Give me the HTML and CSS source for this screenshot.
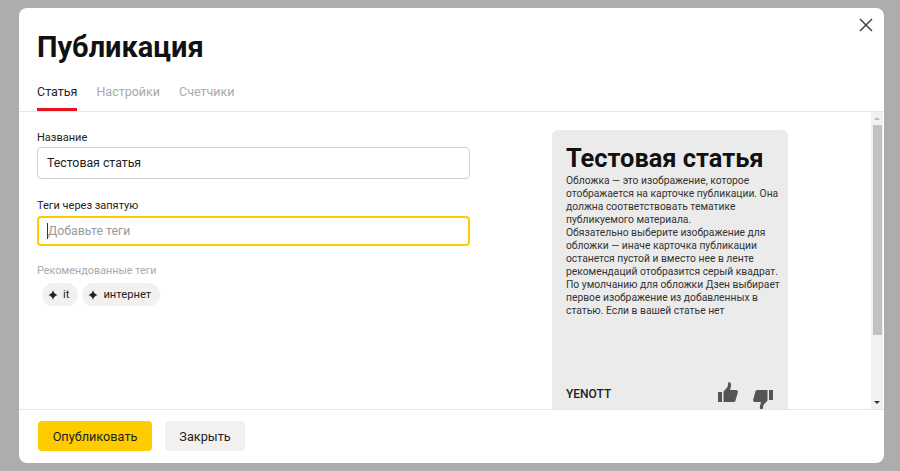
FILE: index.html
```html
<!DOCTYPE html>
<html lang="ru">
<head>
    <meta charset="UTF-8">
    <title>Публикация</title>
    <link rel="stylesheet" href="styles.css">
</head>
<body>
    <div class="modal">
        <button class="close" aria-label="Закрыть">
            <svg width="14" height="14" viewBox="0 0 14 14"><path d="M1 1l12 12M13 1L1 13" stroke="#444" stroke-width="1.5" fill="none"/></svg>
        </button>
        <div class="header">
            <h1>Публикация</h1>
            <div class="tabs">
                <span class="tab active">Статья</span>
                <span class="tab">Настройки</span>
                <span class="tab">Счетчики</span>
            </div>
        </div>
        <div class="content">
            <div class="form">
                <div class="form-group">
                    <label>Название</label>
                    <div class="input">Тестовая статья</div>
                </div>
                <div class="form-group">
                    <label>Теги через запятую</label>
                    <div class="input focused"><span class="caret"></span>Добавьте теги</div>
                </div>
                <div class="rec-title">Рекомендованные теги</div>
                <div class="chips">
                    <span class="chip"><svg width="10" height="10" viewBox="0 0 10 10"><path d="M5 0Q5.800 4.200 10 5 5.800 5.800 5 10 4.200 5.800 0 5 4.200 4.200 5 0z" fill="#222"/></svg>it</span>
                    <span class="chip"><svg width="10" height="10" viewBox="0 0 10 10"><path d="M5 0Q5.800 4.200 10 5 5.800 5.800 5 10 4.200 5.800 0 5 4.200 4.200 5 0z" fill="#222"/></svg>интернет</span>
                </div>
            </div>
            <div class="card">
                <h2>Тестовая статья</h2>
                <p>Обложка — это изображение, которое<br>отображается на карточке публикации. Она<br>должна соответствовать тематике<br>публикуемого материала.</p>
                <p>Обязательно выберите изображение для<br>обложки — иначе карточка публикации<br>останется пустой и вместо нее в ленте<br>рекомендаций отобразится серый квадрат.<br>По умолчанию для обложки Дзен выбирает<br>первое изображение из добавленных в<br>статью. Если в вашей статье нет</p>
                <div class="card-footer">
                    <span class="channel">YENOTT</span>
                    <div class="thumbs">
                        <svg class="up" width="20" height="21" viewBox="0 0 20 21"><path d="M0 10h4v10H0zM5.500 9.500l4-4.500 1-5c2 0 3 1.500 2.500 4l-1 4h6c1.500 0 2.200 1.200 1.800 2.500l-2.300 8c-.3 1-1 1.500-2 1.500h-10z" fill="#555"/></svg>
                        <svg class="down" width="20" height="21" viewBox="0 0 20 21"><path d="M20 11h-4V1h4zM14.500 11.500l-4 4.500-1 5c-2 0-3-1.500-2.500-4l1-4H2C.5 13-.2 11.800.2 10.500l2.300-8c.3-1 1-1.500 2-1.500h10z" fill="#555"/></svg>
                    </div>
                </div>
            </div>
            <div class="scrollbar">
                <span class="arrow up"></span>
                <div class="track"><div class="thumb"></div></div>
                <span class="arrow down"></span>
            </div>
        </div>
        <div class="footer">
            <button class="btn primary">Опубликовать</button>
            <button class="btn">Закрыть</button>
        </div>
    </div>
</body>
</html>
```

FILE: styles.css
```css
html, body { height: 100%; }
body { margin: 0; padding: 8px 16px 8px 19px; box-sizing: border-box; background: #adadad; font-family: Roboto, "Noto Sans", Arial, sans-serif; color: #222; overflow: hidden; }
.modal { position: relative; height: 455px; background: #fff; border-radius: 8px; display: flex; flex-direction: column; overflow: hidden; }
.close { position: absolute; top: 10px; right: 11px; padding: 0; width: 14px; height: 14px; border: none; background: none; }
.header { height: 104px; box-sizing: border-box; padding: 21px 18px 0; border-bottom: 1px solid #e6e6e6; flex: none; }
h1 { margin: 0; font-size: 29px; line-height: 36px; font-weight: 700; color: #111; }
.tabs { display: flex; gap: 19px; margin-top: 17px; }
.tab { font-size: 12.5px; line-height: 20px; padding-bottom: 9px; color: #aaa; border-bottom: 3px solid transparent; height: 17px; }
.tab.active { color: #222; border-bottom-color: #e3131c; }
.content { flex: 1; display: flex; min-height: 0; overflow: hidden; }
.form { width: 433px; padding: 19px 0 0 18px; flex: none; }
.form-group { margin-bottom: 20px; }
.form-group label { display: block; font-size: 11px; line-height: 14px; margin-bottom: 2px; }
.form-group + .form-group { margin-bottom: 0; }
.form-group + .form-group label { margin-bottom: 3px; }
.input { height: 32px; box-sizing: border-box; border: 1px solid #cfcfcf; border-radius: 4px; padding: 0 9px; font-size: 12.3px; line-height: 30px; display: flex; align-items: center; }
.input.focused { height: 30px; border: 2px solid #fc0; padding: 0 8px; color: #999; }
.caret { width: 1px; height: 16px; background: #333; margin-left: 0; }
.rec-title { font-size: 10.8px; line-height: 14px; color: #aaa; margin-top: 18px; }
.chips { display: flex; gap: 4px; margin-top: 5px; margin-left: 5px; }
.chip { display: flex; align-items: center; gap: 5px; height: 23px; padding: 0 9px 0 6px; border-radius: 12px; background: #f2f1ef; font-size: 11.2px; }
.card { width: 236px; height: 280px; margin: 18px 0 0 82px; box-sizing: border-box; padding: 14px 9px 0 14px; background: #ebebeb; border-radius: 6px 6px 0 0; flex: none; display: flex; flex-direction: column; }
.card h2 { margin: 0 0 2px; font-size: 25.4px; line-height: 28px; font-weight: 700; color: #111; white-space: nowrap; }
.card p { margin: 0; font-size: 10.3px; line-height: 13px; color: #333; white-space: nowrap; }
.card-footer { margin-top: auto; height: 27px; display: flex; justify-content: space-between; align-items: flex-start; }
.channel { font-size: 12px; font-weight: 500; line-height: 16px; margin-top: 3px; }
.thumbs { display: flex; gap: 15px; margin-right: 6px; margin-top: -1px; }
.thumbs .down { margin-top: 7px; }
.scrollbar { width: 12px; margin-left: auto; margin-right: 1px; background: #f1f1f1; display: flex; flex-direction: column; align-items: center; flex: none; }
.arrow { width: 0; height: 0; border-left: 3px solid transparent; border-right: 3px solid transparent; flex: none; margin: 5px 0; }
.arrow.up { border-bottom: 3px solid #bbb; }
.arrow.down { border-top: 3px solid #333; }
.track { flex: 1; width: 100%; display: flex; justify-content: center; }
.thumb { width: 9px; height: 210px; background: #c1c1c1; }
.footer { height: 54px; box-sizing: border-box; border-top: 1px solid #e6e6e6; padding: 11px 19px 0; display: flex; gap: 13px; align-items: flex-start; flex: none; }
.btn { height: 30px; width: 80px; padding: 0; border: none; border-radius: 4px; background: #f2f1ef; font-family: inherit; font-size: 12.7px; color: #222; }
.btn.primary { background: #fc0; width: 114px; }
```
